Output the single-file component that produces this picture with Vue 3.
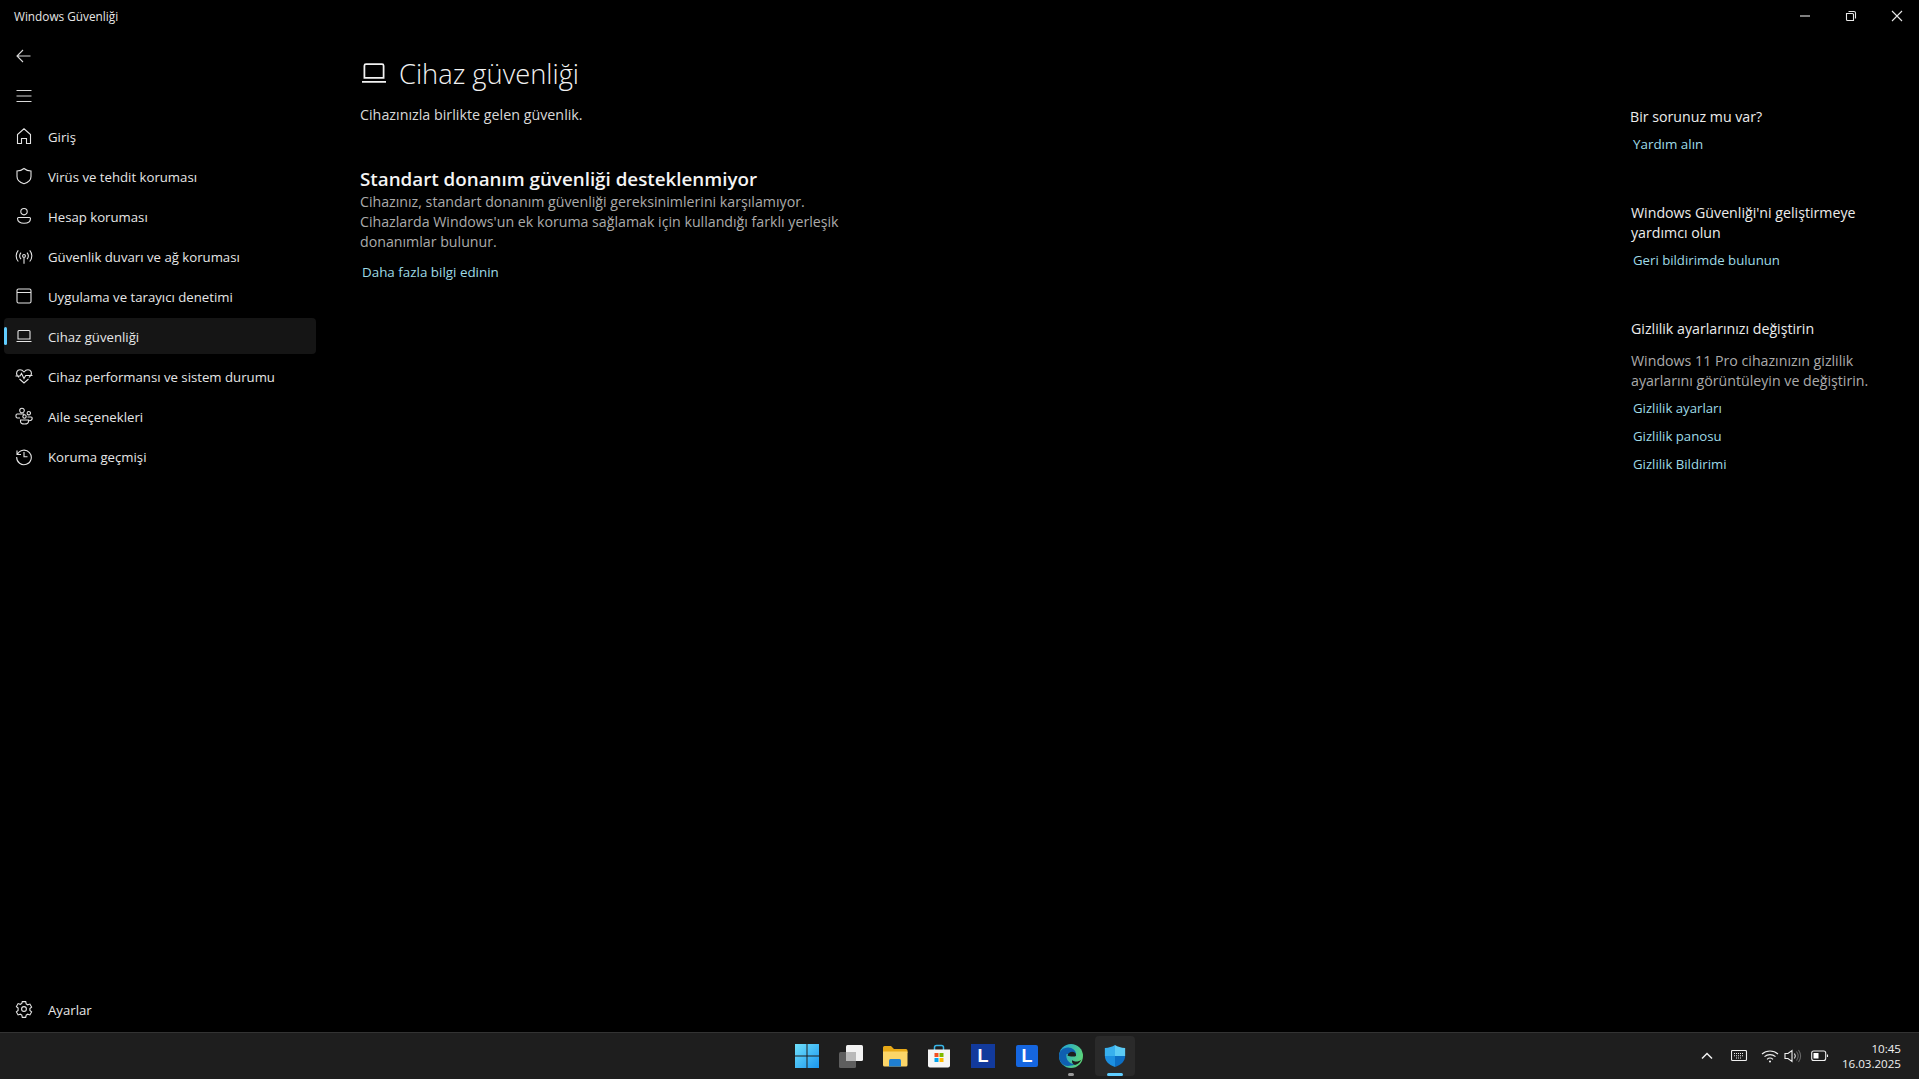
<script setup>
const navItems = [
  { label: 'Giriş', icon: 'home' },
  { label: 'Virüs ve tehdit koruması', icon: 'shield' },
  { label: 'Hesap koruması', icon: 'person' },
  { label: 'Güvenlik duvarı ve ağ koruması', icon: 'wifi' },
  { label: 'Uygulama ve tarayıcı denetimi', icon: 'app' },
  { label: 'Cihaz güvenliği', icon: 'laptop', active: true },
  { label: 'Cihaz performansı ve sistem durumu', icon: 'heart' },
  { label: 'Aile seçenekleri', icon: 'family' },
  { label: 'Koruma geçmişi', icon: 'history' }
]

const iconPaths = {
  home: 'M3.5 17.5V8.6L10 2.8l6.5 5.8v8.9h-4v-5h-5v5z',
  shield: 'M10 2.5c2 1.6 4.4 2.4 7 2.5v5.5c0 3.6-2.4 5.9-7 7.2-4.6-1.3-7-3.6-7-7.2V5c2.6-.1 5-.9 7-2.5z',
  person: 'M10 2.5a3.2 3.2 0 1 1 0 6.4 3.2 3.2 0 0 1 0-6.4zM4.5 11.5h11c.6 0 1 .4 1 1 0 3-2.6 4.8-6.5 4.8s-6.5-1.8-6.5-4.8c0-.6.4-1 1-1z',
  wifi: 'M10 8.5a1.4 1.4 0 1 1 0 2.8 1.4 1.4 0 0 1 0-2.8zM10 11.3v6.5M7 6.7c-1.5 1.8-1.5 4.6 0 6.4M13 6.7c1.5 1.8 1.5 4.6 0 6.4M4.3 4.3c-2.8 3.2-2.8 8 0 11.2M15.7 4.3c2.8 3.2 2.8 8 0 11.2',
  app: 'M4.5 3h11A1.5 1.5 0 0 1 17 4.500v11a1.500 1.500 0 0 1-1.500 1.500h-11A1.500 1.500 0 0 1 3 15.500v-11A1.500 1.500 0 0 1 4.500 3zM3 6.500h14',
  laptop: 'M5 4.500h10a1 1 0 0 1 1 1v7.500H4V5.500a1 1 0 0 1 1-1zM2.500 15.500h15',
  heart: 'M5 11.500L3.400 9.600C1.500 7.200 3 3.800 6 3.800c1.800 0 3 1 4 2.200 1-1.200 2.200-2.200 4-2.200 3 0 4.500 3.400 2.600 5.800L15 11.500M1.500 10h4.500l1.500-2.500 2.500 5 1.700-3h6.800M5.500 13l4.500 4 4.500-4',
  family: 'M8 2.200a2.300 2.300 0 1 1 0 4.600 2.300 2.300 0 0 1 0-4.600zM14.800 5.500a1.700 1.700 0 1 1 0 3.400 1.700 1.700 0 0 1 0-3.400zM10.500 8.800a1.700 1.700 0 1 1 0 3.400 1.700 1.700 0 0 1 0-3.400zM6 12H3.500c-1 0-1.500-.6-1.500-1.500V9.200C2 8.500 2.500 8 3.200 8h7M13.500 11H17c.7 0 1.200.5 1.200 1.200 0 1.500-1.200 2.500-3.200 2.500M6.500 14h8v1.200c0 1.700-1.800 2.800-4 2.800s-4-1.100-4-2.800z',
  history: 'M3 4.500v4h4M3.400 8.300A7.300 7.300 0 1 1 2.700 11M10 6v4.800h3.500'
}

const helpLinks = ['Gizlilik ayarları', 'Gizlilik panosu', 'Gizlilik Bildirimi']
</script>

<template>
  <div class="screen">
    <div class="window">
      <header class="titlebar">
        <span class="app-title">Windows Güvenliği</span>
        <div class="caption">
          <svg width="12" height="12" viewBox="0 0 12 12"><path d="M1 6h10" /></svg>
          <svg width="12" height="12" viewBox="0 0 12 12"><path d="M1.500 3.500h6a1 1 0 0 1 1 1v6h-6a1 1 0 0 1-1-1zM3.500 1.500h5.500a1.500 1.500 0 0 1 1.500 1.500v5.500" /></svg>
          <svg width="12" height="12" viewBox="0 0 12 12"><path d="M1 1l10 10M11 1L1 11" /></svg>
        </div>
      </header>

      <div class="body">
        <aside class="sidebar">
          <div class="nav-btn back">
            <svg width="20" height="20" viewBox="0 0 20 20"><path d="M3.500 10h13M9 4l-6 6 6 6" /></svg>
          </div>
          <div class="nav-btn menu">
            <svg width="20" height="20" viewBox="0 0 20 20"><path d="M2.500 4.500h15M2.500 10h15M2.500 15.500h15" /></svg>
          </div>
          <nav class="nav">
            <div v-for="item in navItems" :key="item.label" class="nav-item" :class="{ active: item.active }">
              <svg class="nav-icon" width="20" height="20" viewBox="0 0 20 20"><path :d="iconPaths[item.icon]" /></svg>
              <span>{{ item.label }}</span>
            </div>
          </nav>
          <div class="nav-item settings">
            <svg class="nav-icon" width="20" height="20" viewBox="0 0 20 20">
              <path d="M8.300 2.600h3.400l.5 2.300 1.500.9 2.200-.7 1.700 3-1.700 1.500v1.800l1.700 1.500-1.700 3-2.200-.7-1.500.9-.5 2.300H8.300l-.5-2.300-1.500-.9-2.200.7-1.700-3 1.700-1.500V9.100L2.400 7.600l1.700-3 2.200.7 1.500-.9z" />
              <circle cx="10" cy="10" r="2.400" />
            </svg>
            <span>Ayarlar</span>
          </div>
        </aside>

        <main class="content">
          <h1 class="page-title">
            <svg width="32" height="32" viewBox="0 0 20 20"><path d="M5 4.500h10a1 1 0 0 1 1 1v7.500H4V5.500a1 1 0 0 1 1-1zM2.500 15.500h15" /></svg>
            <span>Cihaz güvenliği</span>
          </h1>
          <p class="lead">Cihazınızla birlikte gelen güvenlik.</p>
          <h2 class="section-title">Standart donanım güvenliği desteklenmiyor</h2>
          <p class="muted section-text">Cihazınız, standart donanım güvenliği gereksinimlerini karşılamıyor. Cihazlarda Windows'un ek koruma sağlamak için kullandığı farklı yerleşik donanımlar bulunur.</p>
          <a class="link more">Daha fazla bilgi edinin</a>
        </main>

        <aside class="help">
          <section class="help-block first">
            <h3>Bir sorunuz mu var?</h3>
            <a class="link">Yardım alın</a>
          </section>
          <section class="help-block second">
            <h3>Windows Güvenliği'ni geliştirmeye yardımcı olun</h3>
            <a class="link">Geri bildirimde bulunun</a>
          </section>
          <section class="help-block third">
            <h3>Gizlilik ayarlarınızı değiştirin</h3>
            <p class="muted">Windows 11 Pro cihazınızın gizlilik ayarlarını görüntüleyin ve değiştirin.</p>
            <a v-for="l in helpLinks" :key="l" class="link">{{ l }}</a>
          </section>
        </aside>
      </div>
    </div>

    <footer class="taskbar">
      <div class="task-icons">
        <div class="task">
          <svg width="26" height="26" viewBox="0 0 26 26">
            <defs>
              <linearGradient id="winGrad" x1="0" y1="0" x2="1" y2="1"><stop offset="0" stop-color="#6fe0fb" /><stop offset="1" stop-color="#1a96f0" /></linearGradient>
            </defs>
            <path fill="url(#winGrad)" d="M1 1h11.500v11.500H1zM13.500 1H25v11.500H13.500zM1 13.500h11.500V25H1zM13.500 13.500H25V25H13.500z" />
          </svg>
        </div>
        <div class="task">
          <svg width="26" height="26" viewBox="0 0 26 26">
            <rect x="8" y="2" width="17" height="16" rx="1.500" fill="#f2f2f2" />
            <rect x="1" y="9" width="17" height="16" rx="1.500" fill="#5e5e5e" />
            <rect x="8" y="9" width="10" height="9" fill="#b9b9b9" />
          </svg>
        </div>
        <div class="task">
          <svg width="26" height="26" viewBox="0 0 26 26">
            <path fill="#e8a917" d="M1 4.500A1.500 1.500 0 0 1 2.500 3H9l3 3h12a1.500 1.500 0 0 1 1.500 1.500V10H1z" />
            <path fill="#fbd568" d="M1 8.500h24.500V22a1.500 1.500 0 0 1-1.500 1.500H2.500A1.500 1.500 0 0 1 1 22z" />
            <path fill="#1f7fd1" d="M7 17.500A1.500 1.500 0 0 1 8.500 16h9a1.500 1.500 0 0 1 1.500 1.500v6H7z" />
          </svg>
        </div>
        <div class="task">
          <svg width="26" height="26" viewBox="0 0 26 26">
            <path class="handle" d="M8.500 7V4.500a2 2 0 0 1 2-2h5a2 2 0 0 1 2 2V7" fill="none" />
            <path fill="#f5f5f5" d="M2 6.500h22v16a2 2 0 0 1-2 2H4a2 2 0 0 1-2-2z" />
            <path fill="#f25022" d="M8.500 10h4v4h-4z" />
            <path fill="#7fba00" d="M13.500 10h4v4h-4z" />
            <path fill="#00a4ef" d="M8.500 15h4v4h-4z" />
            <path fill="#ffb900" d="M13.500 15h4v4h-4z" />
          </svg>
        </div>
        <div class="task"><div class="letter dark">L</div></div>
        <div class="task"><div class="letter bright">L</div></div>
        <div class="task running">
          <svg width="26" height="26" viewBox="0 0 26 26">
            <defs>
              <linearGradient id="edgeA" x1="0" y1="0" x2="1" y2="0.400"><stop offset="0" stop-color="#1b9de2" /><stop offset="1" stop-color="#59d37c" /></linearGradient>
            </defs>
            <circle cx="13" cy="13" r="12" fill="url(#edgeA)" />
            <path fill="#0f5fb0" d="M1 13c0-5 4-8.500 9-8.500 4.500 0 8 3 8 6.500H8.500c-1 5 2 9.500 8.500 10.500-1.300.6-2.600 1-4 1C6 24.500 1 19.500 1 13z" />
            <path fill="#1e1e1e" d="M9.500 12.500c.6-2.400 2.700-3.700 4.700-3.700s3.300 1 3.800 2.700c.4 1.400-.5 2-2 2-2 0-4.700.2-6.500-1z" />
            <path fill="#1e1e1e" d="M14 17c2 2 6.500 2.200 9.500-.5-1.500 3-4 5-6.500 5.500-2.200-.7-3.300-2.500-3-5z" />
          </svg>
          <i class="dot" />
        </div>
        <div class="task current">
          <svg width="24" height="24" viewBox="0 0 24 26">
            <path fill="#38b0ee" d="M12 1C9 3 5.500 4 1 4.200V13h11z" />
            <path fill="#5ccbf5" d="M12 1c3 2 6.500 3 11 3.200V13H12z" />
            <path fill="#1c8fe0" d="M1 13h11v12C4.500 22.300 1.300 18.400 1 13z" />
            <path fill="#0c6ec4" d="M12 13h11c-.3 5.400-3.500 9.300-11 12z" />
          </svg>
          <i class="bar" />
        </div>
      </div>

      <div class="tray">
        <svg class="chev" width="12" height="8" viewBox="0 0 12 8"><path d="M1 6.500L6 1.500l5 5" /></svg>
        <svg class="kbd" width="18" height="12" viewBox="0 0 18 12">
          <rect x=".5" y=".5" width="15" height="10" rx="1" />
          <path d="M3 3.500h10M3 5.700h10M5 8h6" stroke-dasharray="1 1" />
        </svg>
        <svg class="wifi" width="18" height="14" viewBox="0 0 18 14">
          <path d="M1 5c4.500-4 11.500-4 16 0M3.500 7.700c3.200-2.800 7.800-2.800 11 0M6 10.300c1.800-1.500 4.200-1.500 6 0" />
          <circle cx="9" cy="12.500" r="1" fill="#fff" stroke="none" />
        </svg>
        <svg class="vol" width="18" height="14" viewBox="0 0 18 14">
          <path d="M1 4.500h3l4-3v11l-4-3H1zM10.500 4.500c1 1.500 1 3.500 0 5" />
          <path class="faint" d="M12.500 2.500c2 2.700 2 6.300 0 9M14.500 1c2.600 3.700 2.600 8.300 0 12" />
        </svg>
        <svg class="batt" width="18" height="12" viewBox="0 0 18 12">
          <rect x=".7" y="1" width="14" height="9.500" rx="2" />
          <rect x="2.500" y="3" width="5" height="5.500" fill="#fff" stroke="none" />
          <path d="M16.500 4.500v2.500" />
        </svg>
        <div class="clock">
          <div>10:45</div>
          <div>16.03.2025</div>
        </div>
      </div>
    </footer>
  </div>
</template>

<style scoped>
.screen {
  width: 1919px;
  height: 1079px;
  display: flex;
  flex-direction: column;
  background: #000;
  color: #fff;
  font-family: "Open Sans", "Noto Sans", sans-serif;
  font-size: 13.2px;
  overflow: hidden;
}

svg {
  fill: none;
  stroke: currentColor;
  stroke-width: 1.1;
  flex: none;
}

.window {
  flex: 1;
  display: flex;
  flex-direction: column;
  min-height: 0;
}

.titlebar {
  height: 32px;
  flex: none;
  display: flex;
  align-items: center;
  justify-content: space-between;
  padding-left: 14px;
}

.app-title {
  font-size: 11.8px;
  color: #e6e6e6;
}

.caption {
  display: flex;
  gap: 34px;
  padding-right: 16px;
  color: #e8e8e8;
}

.body {
  flex: 1;
  display: flex;
  min-height: 0;
}

.sidebar {
  width: 360px;
  flex: none;
  display: flex;
  flex-direction: column;
}

.nav-btn {
  height: 40px;
  display: flex;
  align-items: center;
  padding-left: 14px;
  color: #d8d8d8;
}

.back {
  margin-top: 4px;
}

.nav {
  flex: 1;
  display: flex;
  flex-direction: column;
  gap: 4px;
  margin-top: 2px;
}

.nav-item {
  position: relative;
  width: 312px;
  height: 36px;
  margin-left: 4px;
  display: flex;
  align-items: center;
  gap: 14px;
  padding-left: 10px;
  box-sizing: border-box;
  border-radius: 4px;
  color: #e6e6e6;
}

.nav-item span {
  margin-top: 2px;
}

.nav-item.active {
  background: #151515;
}

.nav-item.active::before {
  content: "";
  position: absolute;
  left: 0;
  top: 9px;
  width: 3px;
  height: 18px;
  border-radius: 2px;
  background: #60cdff;
}

.nav-icon {
  color: #e4e4e4;
}

.settings {
  margin-bottom: 5px;
}

.content {
  width: 500px;
  flex: none;
}

.page-title {
  margin: 21px 0 0;
  height: 40px;
  display: flex;
  align-items: center;
  gap: 9px;
  font-size: 27.3px;
  font-weight: 300;
  color: #f2f2f2;
}

.page-title svg {
  margin-left: -2px;
}

.lead {
  margin: 12px 0 0;
  line-height: 20px;
  font-size: 14.3px;
  color: #d8d8d8;
}

.section-title {
  margin: 41px 0 0;
  font-size: 18.8px;
  line-height: 26px;
  font-weight: 600;
  color: #f4f4f4;
}

.muted {
  margin: 0;
  line-height: 20px;
  font-size: 14.2px;
  color: #ababab;
}

.section-text {
  width: 500px;
}

.link {
  display: block;
  color: #9fdbe6;
  font-size: 13.4px;
  line-height: 20px;
  margin-left: 2px;
}

.more {
  margin-top: 10px;
}

.help {
  margin-left: auto;
  width: 289px;
  flex: none;
}

.help h3 {
  margin: 0;
  font-size: 14.2px;
  font-weight: 400;
  line-height: 20px;
  color: #ececec;
}

.help-block {
  display: flex;
  flex-direction: column;
}

.first {
  margin-top: 75px;
}

.first .link {
  margin-top: 7px;
  margin-left: 3px;
}

.second {
  margin-top: 49px;
  padding-left: 1px;
  width: 250px;
}

.second .link {
  margin-top: 7px;
  margin-left: 2px;
  font-size: 13.2px;
}

.third {
  margin-top: 49px;
  padding-left: 1px;
  gap: 8px;
}

.third .muted {
  margin-top: 4px;
  margin-bottom: -1px;
  width: 280px;
}

.third .link {
  margin-left: 2px;
  font-size: 13.2px;
}

.taskbar {
  position: relative;
  height: 47px;
  flex: none;
  box-sizing: border-box;
  border-top: 1px solid #333;
  background: #1e1e1e;
  display: flex;
  justify-content: flex-end;
}

.task-icons {
  position: absolute;
  left: 787px;
  top: 3px;
  display: flex;
  gap: 4px;
}

.task {
  position: relative;
  width: 40px;
  height: 40px;
  display: flex;
  align-items: center;
  justify-content: center;
  border-radius: 4px;
}

.task svg {
  stroke: none;
}

.handle {
  stroke: #38b6e8;
  stroke-width: 1.5;
}

.task.current {
  background: #2a2a2a;
}

.dot {
  position: absolute;
  left: 17px;
  bottom: 0;
  width: 6px;
  height: 3px;
  border-radius: 2px;
  background: #9a9a9a;
}

.bar {
  position: absolute;
  left: 12px;
  bottom: 0;
  width: 16px;
  height: 3px;
  border-radius: 2px;
  background: #60cdff;
}

.letter {
  width: 24px;
  height: 24px;
  display: flex;
  align-items: center;
  justify-content: center;
  font-family: "Liberation Sans", sans-serif;
  font-weight: 700;
  font-size: 18px;
  color: #fff;
}

.dark {
  background: #123a9c;
}

.bright {
  width: 22px;
  height: 22px;
  border-radius: 2px;
  background: #1566e0;
}

.tray {
  display: flex;
  align-items: center;
  padding-right: 18px;
  color: #f0f0f0;
}

.chev {
  margin-right: 18px;
  stroke-width: 1.5;
}

.kbd {
  margin-right: 12px;
}

.wifi {
  margin-right: 5px;
}

.vol {
  margin-right: 9px;
}

.faint {
  opacity: 0.35;
}

.batt {
  margin-right: 13px;
}

.clock {
  text-align: right;
  font-size: 11.6px;
  line-height: 15px;
}
</style>

<style>
html, body {
  background: #000;
  overflow: hidden;
}
</style>
